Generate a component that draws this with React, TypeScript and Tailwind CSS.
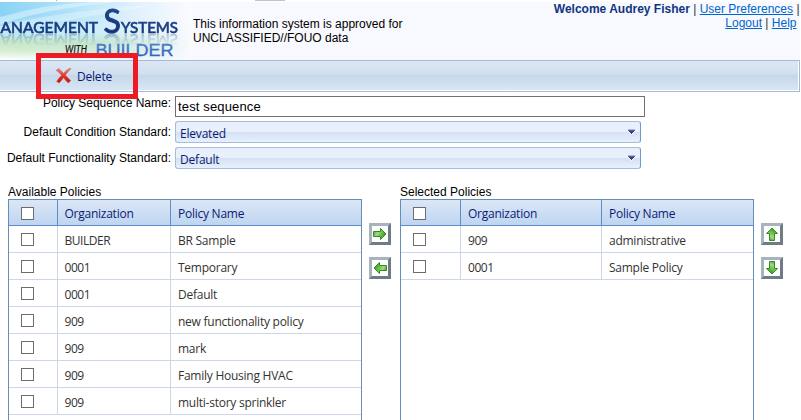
import React from 'react';

const sans = 'font-["Liberation_Sans",Arial,sans-serif]';
const humanist = 'font-["Open_Sans","Noto_Sans",sans-serif]';

function Logo() {
  return (
    <div className="relative h-[58px] w-[193px] shrink-0">
      <svg width="193" height="58" viewBox="0 2 193 58" className="block" fontFamily="Lato, sans-serif">
        <defs>
          <linearGradient id="sky" x1="0" y1="0" x2="1" y2="0">
            <stop offset="0" stopColor="#8ad3f4" />
            <stop offset="0.35" stopColor="#b0e2f9" />
            <stop offset="0.7" stopColor="#e0f1fc" />
            <stop offset="1" stopColor="#fbfbff" />
          </linearGradient>
          <linearGradient id="ground" x1="0" y1="0" x2="0" y2="1">
            <stop offset="0" stopColor="#fff" stopOpacity="0" />
            <stop offset="0.35" stopColor="#d8f4fb" stopOpacity="0.6" />
            <stop offset="0.58" stopColor="#c5e7c6" />
            <stop offset="0.8" stopColor="#d8edd3" />
            <stop offset="1" stopColor="#fff" />
          </linearGradient>
          <linearGradient id="fade" x1="0" y1="0" x2="1" y2="0">
            <stop offset="0" stopColor="#fff" />
            <stop offset="0.45" stopColor="#ddd" />
            <stop offset="1" stopColor="#000" />
          </linearGradient>
          <linearGradient id="blue" x1="0" y1="0" x2="0" y2="1">
            <stop offset="0" stopColor="#5f93e2" />
            <stop offset="0.6" stopColor="#3269c4" />
            <stop offset="1" stopColor="#2b5fb8" />
          </linearGradient>
          <mask id="groundMask"><rect y="2" width="193" height="58" fill="url(#fade)" /></mask>
        </defs>
        <rect y="2" width="193" height="58" fill="#fff" />
        <rect y="2" width="193" height="58" fill="url(#sky)" />
        <path d="M0 17 Q45 4 92 2 H118 Q50 8 0 24Z" fill="#e5f7ff" opacity="0.5" />
        <path d="M0 26 Q65 10 155 5 Q70 19 0 34Z" fill="#fff" opacity="0.3" />
        <g mask="url(#groundMask)"><rect y="16" width="193" height="44" fill="url(#ground)" /></g>
        <text x="65" y="53" fontSize="11" fontStyle="italic" fill="#111" stroke="#111" strokeWidth="0.2" textLength="22" lengthAdjust="spacingAndGlyphs">WITH</text>
        <text x="95.5" y="55.5" fontSize="16.5" fontFamily="Liberation Sans, sans-serif" fill="url(#blue)" stroke="#3a70c8" strokeWidth="0.3" textLength="78" lengthAdjust="spacingAndGlyphs">BUILDER</text>
      </svg>
      <div className="absolute top-0 left-0 h-[32px] w-[193px] [-webkit-box-reflect:below_-1px_linear-gradient(transparent_60%,rgba(0,0,0,0.3))]">
        <svg width="193" height="32" viewBox="0 2 193 32" className="block overflow-visible" fontFamily="Lato, sans-serif">
          <defs>
            <linearGradient id="navy" x1="0" y1="0" x2="0" y2="1">
              <stop offset="0" stopColor="#2450a0" />
              <stop offset="1" stopColor="#112c68" />
            </linearGradient>
          </defs>
          <g fill="url(#navy)" stroke="#1b3d80" strokeWidth="0.7">
            <text x="0.5" y="32.7" fontSize="16" textLength="97.5" lengthAdjust="spacingAndGlyphs">ANAGEMENT</text>
            <text x="103.5" y="32.7" fontSize="32" strokeWidth="1">S</text>
            <text x="121" y="32.7" fontSize="16" textLength="57" lengthAdjust="spacingAndGlyphs">YSTEMS</text>
          </g>
        </svg>
      </div>
    </div>
  );
}

function DeleteIcon() {
  return (
    <svg width="18" height="18" viewBox="0 0 18 18" className="block">
      <defs>
        <linearGradient id="red" x1="0" y1="0" x2="0" y2="1">
          <stop offset="0" stopColor="#ef8b83" />
          <stop offset="0.45" stopColor="#e23a30" />
          <stop offset="1" stopColor="#c80d08" />
        </linearGradient>
      </defs>
      <path d="M1.2 3.3 L3.8 1.6 Q6.3 3.6 8.4 6.4 Q11 3 14.8 1.3 L16 1.8 Q12.5 4.8 10.4 8.2 Q13 11 15.8 13.6 L13.4 16 Q10.6 13.6 8.5 10.7 Q6.4 13.6 4.2 16 L1.6 14.5 Q3.6 11 6.6 8.3 Q4.4 5.6 1.2 3.3Z" fill="url(#red)" stroke="#c9534c" strokeWidth="0.5" />
    </svg>
  );
}

function SelectBox({ value }: { value: string }) {
  return (
    <div className="flex h-[22px] w-[466px] items-center justify-between rounded-[3px] border border-[#a3bddd] border-r-[#7099cc] bg-[linear-gradient(#e9f0fc_0_10px,#d3e1f4_10px,#e8f0fb)] pr-[4px] pl-[4px]">
      <span className={`${humanist} pt-[4px] text-[12px] leading-[16px] tracking-[-0.2px] text-[#0b1b73]`}>{value}</span>
      <svg width="9" height="6" viewBox="0 0 9 6" className="mb-px">
        <path d="M0 1 H9 L4.5 6Z" fill="#fff" />
        <path d="M1 1 H8 V2 H7 V3 H6 V4 H5 V5 H4 V4 H3 V3 H2 V2 H1Z" fill="#36417d" />
        <path d="M1 1 H8" stroke="#6484cd" />
      </svg>
    </div>
  );
}

const turns = { right: 'rotate-0', left: 'rotate-180', up: '-rotate-90', down: 'rotate-90' };

function ArrowButton({ dir }: { dir: keyof typeof turns }) {
  return (
    <button type="button" aria-label={dir} className="block size-[22px] border-[3px] border-t-[#a8b4bd] border-r-[#6f7c86] border-b-[#6f7c86] border-l-[#a8b4bd] bg-white">
      <svg width="16" height="16" viewBox="0 0 16 16" className={turns[dir]}>
        <defs>
          <linearGradient id={`green-${dir}`} x1="0" y1="0" x2="1" y2="0.4">
            <stop offset="0" stopColor="#338722" />
            <stop offset="0.4" stopColor="#a1da7d" />
            <stop offset="1" stopColor="#35a51c" />
          </linearGradient>
        </defs>
        <path d="M1.5 5.5 H8.5 V2.5 L14 8 L8.5 13.5 V10.5 H1.5Z" fill={`url(#green-${dir})`} stroke="#348a24" strokeWidth="1" />
      </svg>
    </button>
  );
}

function Check() {
  return <span className="block size-[13px] border border-[#6c6c6c] bg-white" />;
}

type Row = { org: string; name: string };

function PolicyTable({ rows, cols, pad }: { rows: Row[]; cols: string; pad: string }) {
  return (
    <div className={`w-[354px] ${humanist} h-[222px] border border-b-0 border-[#648fbd] text-[12px] leading-[16px] text-[#333]`}>
      <div className={`grid h-[26px] ${cols} border-b border-[#5c8ec9] bg-linear-to-b from-[#dce7f5] to-[#bed5f1] text-[#0b1b73]`}>
        <div className="border-r border-[#5c8ec9] pt-[7px] pl-[12px]"><Check /></div>
        <div className={`border-r border-[#5c8ec9] pt-[6px] ${pad} tracking-[-0.25px]`}>Organization</div>
        <div className="pt-[6px] pl-[7px] tracking-[-0.25px]">Policy Name</div>
      </div>
      {rows.map((r, i) => (
        <div key={i} className={`grid h-[27px] ${cols} border-b border-[#ccd7e7]`}>
          <div className="border-r border-[#ccd7e7] pt-[7px] pl-[12px]"><Check /></div>
          <div className={`border-r border-[#ccd7e7] pt-[7px] ${pad} tracking-[-0.45px]`}>{r.org}</div>
          <div className="pt-[7px] pl-[7px] tracking-[-0.25px] whitespace-nowrap">{r.name}</div>
        </div>
      ))}
    </div>
  );
}

const available: Row[] = [
  { org: 'BUILDER', name: 'BR Sample' },
  { org: '0001', name: 'Temporary' },
  { org: '0001', name: 'Default' },
  { org: '909', name: 'new functionality policy' },
  { org: '909', name: 'mark' },
  { org: '909', name: 'Family Housing HVAC' },
  { org: '909', name: 'multi-story sprinkler' },
];

const selected: Row[] = [
  { org: '909', name: 'administrative' },
  { org: '0001', name: 'Sample Policy' },
];

const link = 'text-[#0066cc] underline';
const label = 'w-[171px] shrink-0 whitespace-nowrap text-right';

export default function App() {
  return (
    <div className={`${sans} h-[420px] w-[801px] overflow-hidden bg-white text-[12px] leading-[14px] text-black`}>
      <div className="flex h-[2px]">
        <div className="ml-[56px] h-px w-px bg-[#aaa]" />
        <div className="ml-[198px] h-px w-[30px] bg-[#c3c3c3]" />
      </div>
      <header className="flex h-[58px] w-[800px] bg-[#f8f8ff]">
        <Logo />
        <div className="w-[230px] pt-[15px]">
          This information system is approved for<br />UNCLASSIFIED//FOUO data
        </div>
        <div className="ml-auto pr-[3px] text-right whitespace-nowrap text-[#333]">
          <div className="-mr-[2.5px]"><b className="text-[#12357f]">Welcome Audrey Fisher</b> | <a className={link}>User Preferences</a> |</div>
          <div className="mr-[0.5px]"><a className={link}>Logout</a> | <a className={link}>Help</a></div>
        </div>
      </header>

      <nav className="relative h-[32px] w-[800px] border border-l-0 border-[#a3badb] bg-white pr-px pb-px">
        <div className="h-full bg-[linear-gradient(#dce7f4_0,#cfdeef_14px,#c5d7e9_14px,#d8e6f4)]">
          <div className="flex items-start pt-[6px] pl-[55px]">
            <DeleteIcon />
            <span className={`${humanist} mt-px ml-[4px] text-[12px] leading-[18px] tracking-[-0.2px] text-[#0b1b73]`}>Delete</span>
          </div>
        </div>
        <div className="absolute top-[-8px] left-[36px] z-10 h-[46px] w-[102px] border-[5px] border-[#ed1c24]" />
      </nav>

      <form className="pt-[4px]">
        <div className="flex h-[21px]">
          <label className={label}>Policy Sequence Name:</label>
          <div className="ml-[4px] h-[21px] w-[470px] border border-[#707070] pt-[3px] pl-[2px] text-[13px] tracking-[0.15px]">test sequence</div>
        </div>
        <div className="mt-[4px] flex h-[22px]">
          <label className={`${label} pt-[4px]`}>Default Condition Standard:</label>
          <div className="ml-[4px]"><SelectBox value="Elevated" /></div>
        </div>
        <div className="mt-[4px] flex h-[22px]">
          <label className={`${label} pt-[4px]`}>Default Functionality Standard:</label>
          <div className="ml-[4px]"><SelectBox value="Default" /></div>
        </div>
      </form>

      <main className="flex pt-[16px] pl-[8px]">
        <section>
          <h2 className="h-[14px]">Available Policies</h2>
          <PolicyTable rows={available} cols="grid-cols-[49px_113px_1fr]" pad="pl-[6.5px]" />
        </section>
        <div className="ml-[7px] flex flex-col gap-[12px] pt-[38px]">
          <ArrowButton dir="right" />
          <ArrowButton dir="left" />
        </div>
        <section className="ml-[9px]">
          <h2 className="h-[14px]">Selected Policies</h2>
          <PolicyTable rows={selected} cols="grid-cols-[60px_141px_1fr]" pad="pl-[7px]" />
        </section>
        <div className="ml-[7px] flex flex-col gap-[12px] pt-[38px]">
          <ArrowButton dir="up" />
          <ArrowButton dir="down" />
        </div>
      </main>
    </div>
  );
}
